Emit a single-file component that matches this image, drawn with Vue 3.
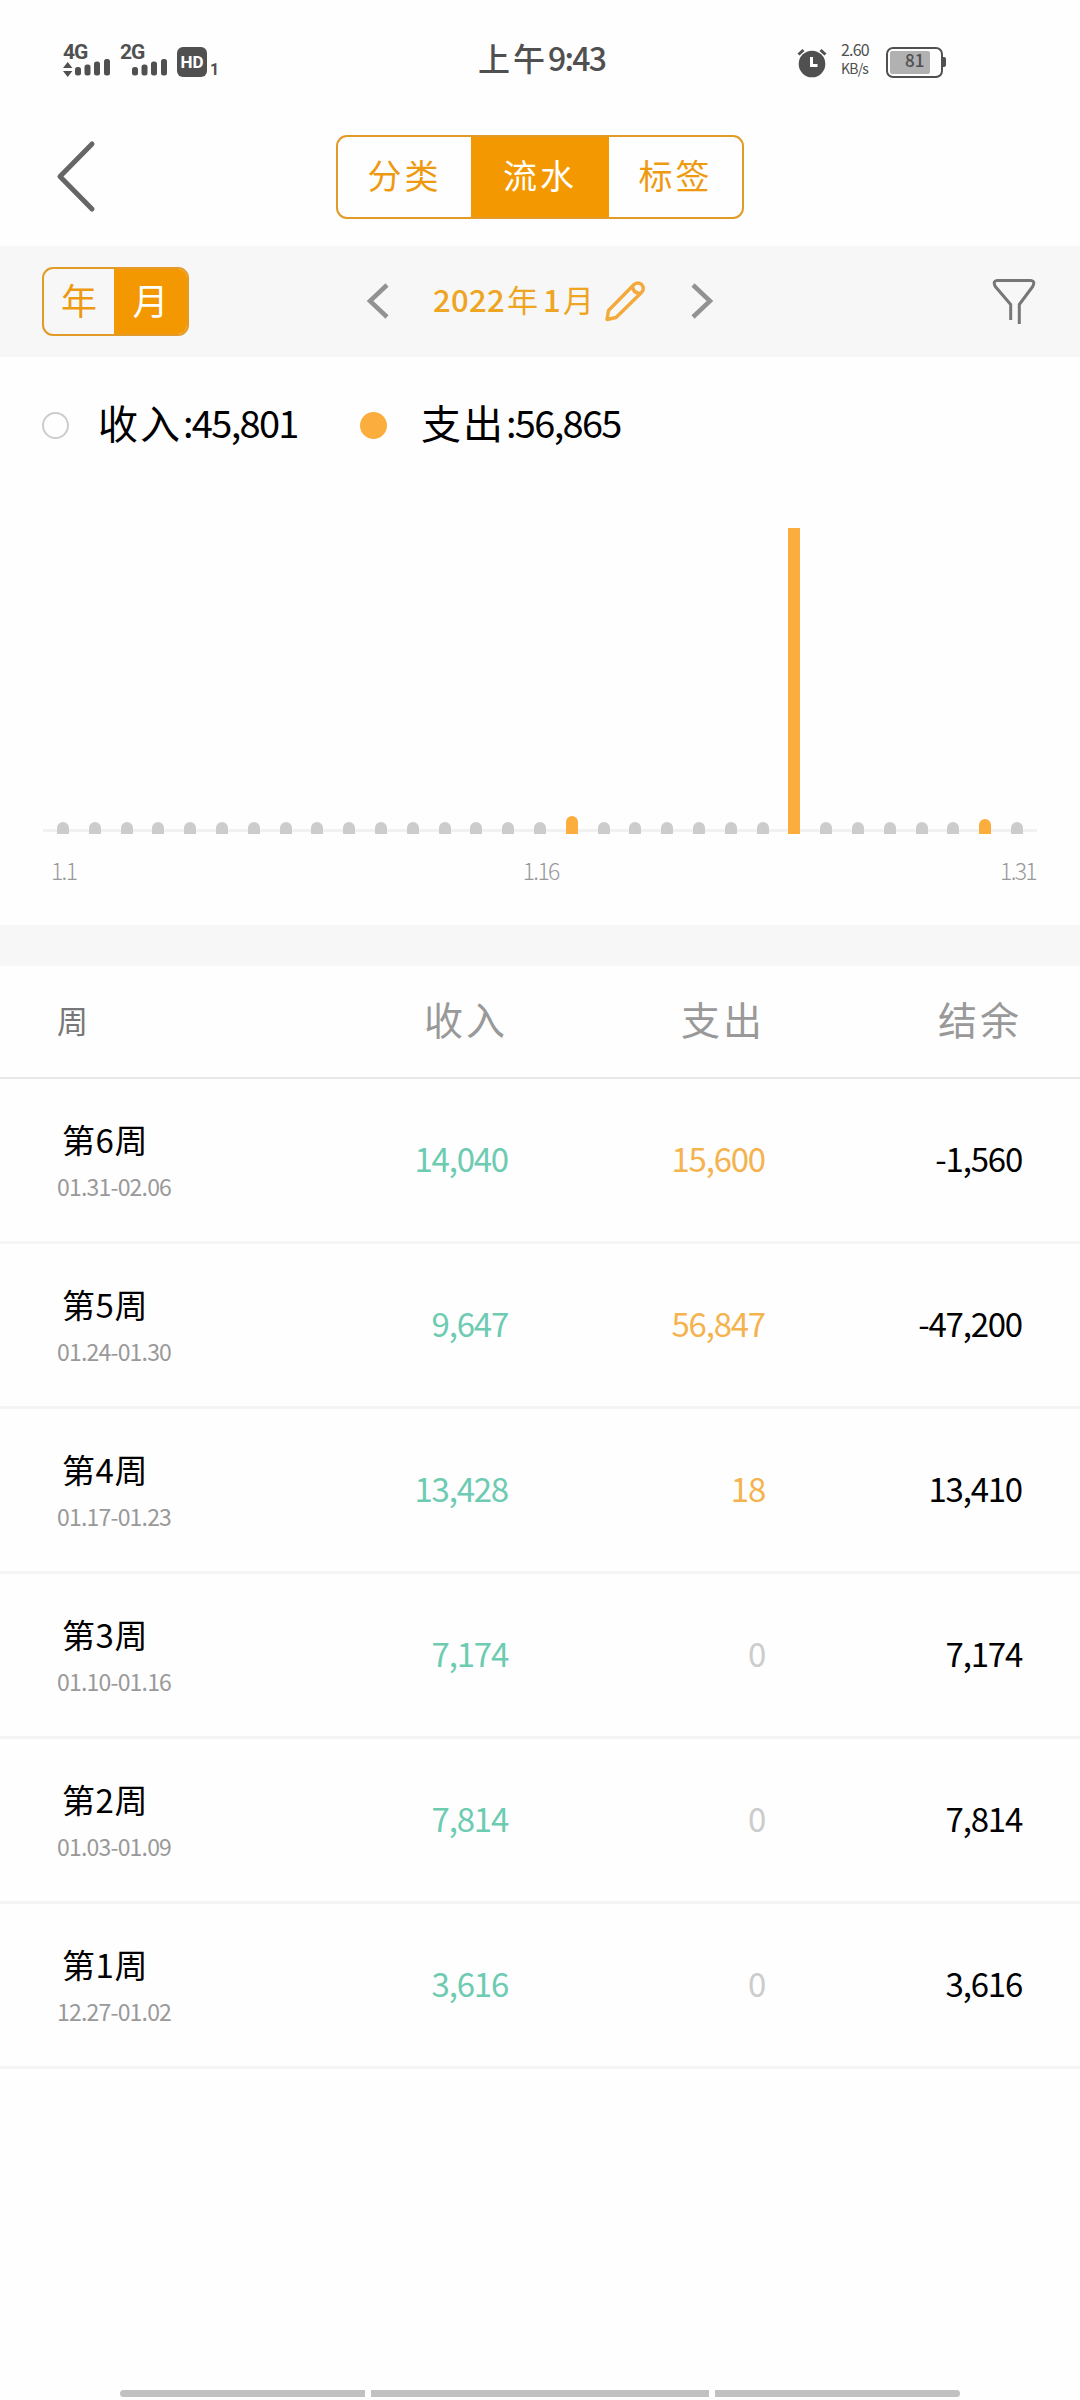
<script setup>
const tabs = ['分类', '流水', '标签']
const days = Array.from({ length: 31 }, (_, i) => {
  const day = i + 1
  const special = { 17: 18, 24: 306, 30: 15 }[day]
  return { day, height: special || 12, active: !!special, flat: day === 24 }
})
const weeks = [
  { name: '第6周', range: '01.31-02.06', income: '14,040', expense: '15,600', balance: '-1,560' },
  { name: '第5周', range: '01.24-01.30', income: '9,647', expense: '56,847', balance: '-47,200' },
  { name: '第4周', range: '01.17-01.23', income: '13,428', expense: '18', balance: '13,410' },
  { name: '第3周', range: '01.10-01.16', income: '7,174', expense: '0', balance: '7,174' },
  { name: '第2周', range: '01.03-01.09', income: '7,814', expense: '0', balance: '7,814' },
  { name: '第1周', range: '12.27-01.02', income: '3,616', expense: '0', balance: '3,616' }
]
</script>

<template>
  <div class="screen">
    <header class="status">
      <div class="net net-4g">
        <span class="gen">4G</span>
        <svg width="48" height="20" viewBox="0 0 48 20" fill="#505050">
          <path d="M0 10 4.700 4l4.700 6zM0 13h9.400L4.700 19z" />
          <rect x="12" y="9" width="6" height="8.500" rx="2.500" />
          <rect x="21.500" y="6.500" width="6" height="11" rx="2.500" />
          <rect x="31" y="3.500" width="6" height="14" rx="2.500" />
          <rect x="41" y="1" width="6" height="16.500" rx="2.500" />
        </svg>
      </div>
      <div class="net net-2g">
        <span class="gen">2G</span>
        <svg width="48" height="20" viewBox="0 0 48 20" fill="#505050">
          <rect x="12" y="9" width="6" height="8.500" rx="2.500" />
          <rect x="21.500" y="6.500" width="6" height="11" rx="2.500" />
          <rect x="31" y="3.500" width="6" height="14" rx="2.500" />
          <rect x="41" y="1" width="6" height="16.500" rx="2.500" />
        </svg>
      </div>
      <div class="hd">HD</div>
      <span class="sim">1</span>
      <div class="clock"><span class="ampm">上午</span>9:43</div>
      <svg class="alarm" width="30" height="30" viewBox="0 0 30 30">
        <circle cx="15" cy="16" r="13.300" fill="#505050" />
        <path d="M1.500 6.500 6.500 2M28.500 6.500 23.500 2" stroke="#505050" stroke-width="3" />
        <path d="M14.500 9v8.500h6" fill="none" stroke="#fff" stroke-width="3" />
      </svg>
      <div class="speed"><span>2.60</span><span class="unit">KB/s</span></div>
      <div class="battery"><div class="level"></div><span>81</span></div>
      <div class="nub"></div>
    </header>

    <nav class="nav">
      <svg class="back" width="44" height="76" viewBox="0 0 44 76">
        <path d="M38 5 6 37.500 38 70" fill="none" stroke="#666" stroke-width="5" stroke-linecap="round" stroke-linejoin="round" />
      </svg>
      <div class="tabs">
        <div v-for="(t, i) in tabs" :key="t" class="tab" :class="{ on: i === 1 }">{{ t }}</div>
      </div>
    </nav>

    <section class="filter">
      <div class="toggle">
        <div class="opt year">年</div>
        <div class="opt month">月</div>
      </div>
      <svg class="prev" width="24" height="38" viewBox="0 0 24 38">
        <path d="M21 3 4 19 21 35" fill="none" stroke="#929292" stroke-width="4.500" />
      </svg>
      <div class="period"><span class="y">2022</span><span>年</span><span class="m">1</span><span>月</span></div>
      <svg class="pencil" width="42" height="42" viewBox="0 0 42 42" fill="none" stroke="#f3a93c" stroke-width="3.400" stroke-linejoin="round">
        <path d="M3 39.500 4.500 30.500 30 4.500Q34 1.300 37.700 4.500 41 8.500 37.500 12.500L12 37.500z" />
        <path d="M28.500 6.500Q29 12.500 35.500 13.500" />
      </svg>
      <svg class="next" width="24" height="38" viewBox="0 0 24 38">
        <path d="M3 3 20 19 3 35" fill="none" stroke="#929292" stroke-width="4.500" />
      </svg>
      <svg class="funnel" width="46" height="48" viewBox="0 0 46 48">
        <path d="M19.700 42V26.500L4.300 8.500Q1.500 3 6 2.500H40Q44.500 3 41.700 8.500L28.300 26.500V46" fill="none" stroke="#777" stroke-width="3" stroke-linejoin="round" />
      </svg>
    </section>

    <section class="legend">
      <i class="dot"></i>
      <span class="lname">收入</span><span class="lval">:45,801</span>
      <i class="dot full"></i>
      <span class="lname">支出</span><span class="lval">:56,865</span>
    </section>

    <section class="chart">
      <div class="bars">
        <div
          v-for="d in days"
          :key="d.day"
          class="bar"
          :class="{ active: d.active, flat: d.flat }"
          :style="{ height: d.height + 'px' }"
        ></div>
      </div>
      <div class="axis"><span>1.1</span><span class="center">1.16</span><span>1.31</span></div>
    </section>

    <div class="band"></div>

    <section class="table">
      <div class="row head">
        <span class="week">周</span><span>收入</span><span>支出</span><span>结余</span>
      </div>
      <div v-for="w in weeks" :key="w.name" class="row">
        <div class="week">
          <div class="name">{{ w.name }}</div>
          <div class="range">{{ w.range }}</div>
        </div>
        <span class="num income">{{ w.income }}</span>
        <span class="num expense" :class="{ zero: w.expense === '0' }">{{ w.expense }}</span>
        <span class="num balance">{{ w.balance }}</span>
      </div>
    </section>

    <footer class="gesture"><i></i><i class="mid"></i><i></i></footer>
  </div>
</template>

<style>
body {
  margin: 0;
  background: #fefefe;
}
</style>

<style scoped>
.screen {
  width: 1080px;
  height: 2400px;
  display: flex;
  flex-direction: column;
  overflow: hidden;
  background: #fefefe;
  color: #000;
  font-family: "Noto Sans CJK SC", "Noto Sans", sans-serif;
}
.screen * {
  box-sizing: border-box;
}
svg {
  display: block;
  flex: none;
}

/* status bar */
.status {
  height: 110px;
  flex: none;
  display: flex;
  align-items: flex-start;
  padding: 43px 0 0 63px;
  color: #505050;
  white-space: nowrap;
}
.net {
  width: 57px;
}
.gen {
  display: block;
  height: 15px;
  font: 700 21px/19px "Roboto", sans-serif;
  letter-spacing: -1px;
}
.hd {
  width: 30px;
  height: 30px;
  margin-top: 4px;
  border-radius: 6px;
  background: #505050;
  color: #fff;
  text-align: center;
  font: 700 17px/31px "Roboto", sans-serif;
}
.sim {
  width: 10px;
  margin: 19px 0 0 3px;
  font: 700 16px/16px "Roboto", sans-serif;
}
.clock {
  width: 150px;
  margin: -4px 0 0 258px;
  font-size: 32px;
  font-weight: 500;
  line-height: 36px;
  letter-spacing: -1.8px;
}
.ampm {
  letter-spacing: 3px;
}
.alarm {
  margin: 5px 0 0 169px;
}
.speed {
  width: 30px;
  margin: -2px 0 0 14px;
  display: flex;
  flex-direction: column;
  font-size: 16px;
  line-height: 16px;
  letter-spacing: -0.8px;
}
.unit {
  font-size: 14px;
  line-height: 22px;
}
.battery {
  width: 57px;
  height: 31px;
  margin: 4px 0 0 15px;
  padding: 2px;
  border: 2px solid #505050;
  border-radius: 7px;
  position: relative;
}
.level {
  width: 40px;
  height: 23px;
  background: #b1b1b1;
  border-radius: 2px;
}
.battery span {
  position: absolute;
  left: 17px;
  top: 0;
  font-size: 17px;
  line-height: 22px;
  font-weight: 500;
}
.nub {
  width: 3px;
  height: 10px;
  margin-top: 14px;
  background: #505050;
  border-radius: 0 2px 2px 0;
}

/* top navigation */
.nav {
  height: 136px;
  flex: none;
  display: flex;
  align-items: flex-start;
  padding: 25px 0 0 54px;
}
.back {
  margin-top: 4px;
}
.tabs {
  width: 408px;
  height: 84px;
  margin-left: 238px;
  display: flex;
  border: 2px solid #e29b26;
  border-radius: 11px;
  overflow: hidden;
}
.tab {
  flex: 1;
  text-align: center;
  color: #ee9a11;
  font-size: 34px;
  line-height: 76px;
  letter-spacing: 3px;
}
.tab.on {
  flex: 0 0 138px;
  background: #f39800;
  color: #fff;
}

/* period filter */
.filter {
  height: 111px;
  flex: none;
  display: flex;
  align-items: flex-start;
  padding: 21px 0 0 42px;
  background: #f7f7f7;
}
.toggle {
  width: 147px;
  height: 69px;
  display: flex;
  border: 2px solid #e29b26;
  border-radius: 11px;
  overflow: hidden;
  font-size: 36px;
  line-height: 60px;
  text-align: center;
  color: #ee9a11;
}
.year {
  width: 70px;
}
.month {
  flex: 1;
  background: #f39800;
  color: #fff;
}
.prev {
  margin: 15px 0 0 177px;
}
.period {
  width: 170px;
  margin: 9px 0 0 43px;
  display: flex;
  align-items: center;
  color: #eda522;
  font-size: 31px;
  line-height: 46px;
  white-space: nowrap;
}
.period .y {
  width: 74px;
  letter-spacing: 0.3px;
  font-weight: 500;
}
.period .m {
  width: 25px;
  padding-left: 5px;
  font-weight: 500;
}
.pencil {
  margin: 13px 0 0 1px;
}
.next {
  margin: 15px 0 0 44px;
}
.funnel {
  margin: 11px 0 0 277px;
}

/* legend */
.legend {
  height: 137px;
  flex: none;
  display: flex;
  align-items: center;
  padding: 0 0 0 42px;
  white-space: nowrap;
}
.dot {
  width: 27px;
  height: 27px;
  border: 2px solid #ccc;
  border-radius: 50%;
}
.dot.full {
  margin-left: 60px;
  border: 0;
  background: #fbad3d;
}
.lname {
  width: 85px;
  margin: -7px 0 0 29px;
  font-size: 40px;
  line-height: 50px;
  letter-spacing: 2px;
}
.dot.full + .lname {
  margin-left: 34px;
}
.lval {
  width: 117px;
  margin-top: -7px;
  font-size: 38px;
  line-height: 50px;
  letter-spacing: -1.7px;
}

/* chart */
.chart {
  height: 431px;
  flex: none;
  padding: 0 43px;
}
.bars {
  height: 340px;
  display: flex;
  justify-content: space-between;
  align-items: flex-end;
  padding: 0 14px;
  background: linear-gradient(#f1f1f1, #f1f1f1) 0 335px / 100% 3px no-repeat;
}
.bar {
  width: 12px;
  background: #ccc;
  border-radius: 6px 6px 0 0;
}
.bar.active {
  background: #fbad3d;
}
.bar.flat {
  border-radius: 0;
}
.axis {
  display: flex;
  justify-content: space-between;
  padding: 19px 1px 0 8px;
  color: #999;
  font-size: 23px;
  line-height: 34px;
  letter-spacing: -1.7px;
  font-weight: 300;
}
.center {
  margin-left: 5px;
}
.band {
  height: 41px;
  flex: none;
  background: #f7f7f7;
}

/* weekly table */
.row {
  height: 165px;
  display: grid;
  grid-template-columns: 251px 257px 257px 257px;
  align-items: center;
  border-bottom: 3px solid #f4f4f4;
  font-size: 33px;
  line-height: 40px;
  letter-spacing: -1px;
  text-align: right;
}
.row.head {
  height: 113px;
  border-bottom: 2px solid #e8e8e8;
  color: #999;
  font-size: 39px;
  letter-spacing: 3px;
  padding-bottom: 7px;
}
.week {
  padding-left: 57px;
  text-align: left;
}
.head .week {
  padding-top: 4px;
  color: #777;
  font-size: 31px;
}
.name {
  padding: 2px 0 0 5px;
  font-size: 33px;
  line-height: 46px;
  letter-spacing: 0.6px;
}
.range {
  margin-top: 4px;
  color: #999;
  font-size: 23px;
  line-height: 40px;
  letter-spacing: -0.8px;
}
.num {
  padding-bottom: 4px;
  letter-spacing: -1.2px;
}
.income {
  color: #6dcbb2;
}
.expense {
  color: #f5b34f;
}
.expense.zero {
  color: #ccc;
}

/* gesture bar */
.gesture {
  margin-top: auto;
  flex: none;
  display: flex;
  gap: 6px;
  padding: 0 120px 3px;
}
.gesture i {
  width: 245px;
  height: 7px;
  background: #c1c1c1;
  border-radius: 4px 0 0 4px;
}
.gesture i.mid {
  width: 338px;
  border-radius: 0;
}
.gesture i:last-child {
  border-radius: 0 4px 4px 0;
}
</style>
